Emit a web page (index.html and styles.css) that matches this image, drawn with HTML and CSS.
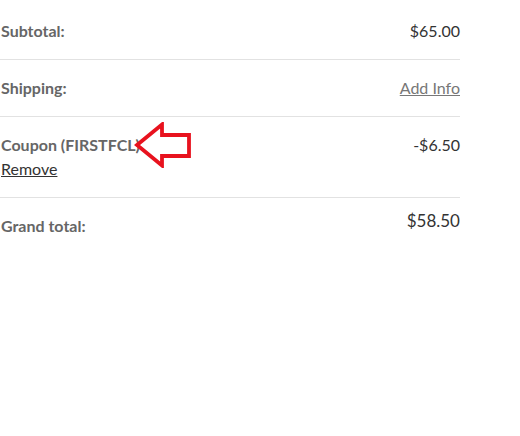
FILE: index.html
```html
<!DOCTYPE html>
<html lang="en">
  <head>
    <meta charset="UTF-8" />
    <meta name="viewport" content="width=device-width, initial-scale=1.0" />
    <title>Cart totals</title>
    <link rel="stylesheet" href="styles.css">
  </head>
  <body>
    <div class="totals">
      <div class="row first">
        <div class="label">Subtotal:</div>
        <div class="value">$65.00</div>
      </div>

      <div class="row">
        <div class="label">Shipping:</div>
        <a href="#" class="value link-muted">Add Info</a>
      </div>

      <div class="row">
        <div class="coupon">
          <div class="label">
            Coupon (FIRSTFCL)
            <svg class="arrow" width="58" height="46" viewBox="0 0 58 46">
              <path d="M3 23 L28 2.5 L28 13 L55 13 L55 34 L28 34 L28 43.5 Z" fill="none" stroke="#e8121e" stroke-width="3.8" stroke-linejoin="miter" />
            </svg>
          </div>
          <a href="#" class="link-remove">Remove</a>
        </div>
        <div class="value">-$6.50</div>
      </div>

      <div class="row last">
        <div class="label">Grand total:</div>
        <div class="value grand">$58.50</div>
      </div>
    </div>
  </body>
</html>
```

FILE: styles.css
```css
/* Basis */
body {
  font-family: "Lato", "Liberation Sans", sans-serif;
  margin: 0;
  padding: 0;
  background-color: #ffffff;
  color: #333;
}

/* Totals */
.totals {
  width: 460px;
  padding-top: 3px;
}

.row {
  display: flex;
  justify-content: space-between;
  align-items: flex-start;
  padding: 16px 0;
  border-bottom: 1px solid #e2e2e2;
  font-size: 16px;
  line-height: 24px;
}

.row.last {
  border-bottom: none;
}

.label {
  font-weight: bold;
  color: #666;
  padding-left: 1px;
  position: relative;
}

.value {
  color: #333;
}

.value.grand {
  font-size: 17px;
  margin-top: -5px;
}

.link-muted {
  color: #777;
  text-decoration: underline;
}

.link-remove {
  display: block;
  color: #333;
  text-decoration: underline;
  padding-left: 1px;
}

/* Markering */
.arrow {
  position: absolute;
  left: 134px;
  top: -11px;
}
```
